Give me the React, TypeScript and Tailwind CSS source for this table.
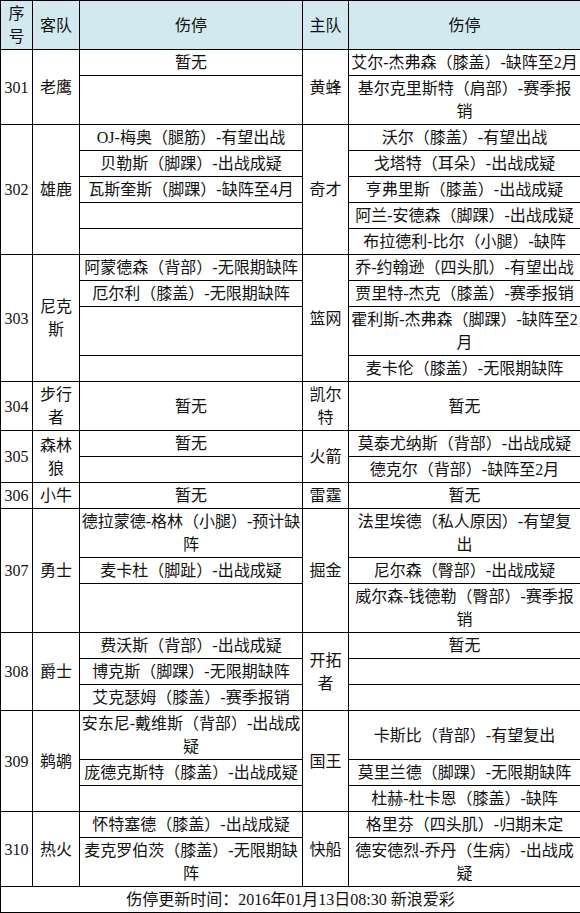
// NBA 伤停表 (2016-01-13)

type Group = {
  no: string
  away: string
  home: string
  left: string[]
  right: string[]
}

const groups: Group[] = [
  {
    no: '301',
    away: '老鹰',
    home: '黄蜂',
    left: ['暂无', ''],
    right: ['艾尔-杰弗森（膝盖）-缺阵至2月', '基尔克里斯特（肩部）-赛季报销'],
  },
  {
    no: '302',
    away: '雄鹿',
    home: '奇才',
    left: ['OJ-梅奥（腿筋）-有望出战', '贝勒斯（脚踝）-出战成疑', '瓦斯奎斯（脚踝）-缺阵至4月', '', ''],
    right: [
      '沃尔（膝盖）-有望出战',
      '戈塔特（耳朵）-出战成疑',
      '亨弗里斯（膝盖）-出战成疑',
      '阿兰-安德森（脚踝）-出战成疑',
      '布拉德利-比尔（小腿）-缺阵',
    ],
  },
  {
    no: '303',
    away: '尼克斯',
    home: '篮网',
    left: ['阿蒙德森（背部）-无限期缺阵', '厄尔利（膝盖）-无限期缺阵', '', ''],
    right: [
      '乔-约翰逊（四头肌）-有望出战',
      '贾里特-杰克（膝盖）-赛季报销',
      '霍利斯-杰弗森（脚踝）-缺阵至2月',
      '麦卡伦（膝盖）-无限期缺阵',
    ],
  },
  { no: '304', away: '步行者', home: '凯尔特', left: ['暂无'], right: ['暂无'] },
  {
    no: '305',
    away: '森林狼',
    home: '火箭',
    left: ['暂无', ''],
    right: ['莫泰尤纳斯（背部）-出战成疑', '德克尔（背部）-缺阵至2月'],
  },
  { no: '306', away: '小牛', home: '雷霆', left: ['暂无'], right: ['暂无'] },
  {
    no: '307',
    away: '勇士',
    home: '掘金',
    left: ['德拉蒙德-格林（小腿）-预计缺阵', '麦卡杜（脚趾）-出战成疑', ''],
    right: ['法里埃德（私人原因）-有望复出', '尼尔森（臀部）-出战成疑', '威尔森-钱德勒（臀部）-赛季报销'],
  },
  {
    no: '308',
    away: '爵士',
    home: '开拓者',
    left: ['费沃斯（背部）-出战成疑', '博克斯（脚踝）-无限期缺阵', '艾克瑟姆（膝盖）-赛季报销'],
    right: ['暂无', '', ''],
  },
  {
    no: '309',
    away: '鹈鹕',
    home: '国王',
    left: ['安东尼-戴维斯（背部）-出战成疑', '庞德克斯特（膝盖）-出战成疑', ''],
    right: ['卡斯比（背部）-有望复出', '莫里兰德（脚踝）-无限期缺阵', '杜赫-杜卡恩（膝盖）-缺阵'],
  },
  {
    no: '310',
    away: '热火',
    home: '快船',
    left: ['怀特塞德（膝盖）-出战成疑', '麦克罗伯茨（膝盖）-无限期缺阵'],
    right: ['格里芬（四头肌）-归期未定', '德安德烈-乔丹（生病）-出战成疑'],
  },
]

const cell = 'border border-black text-center align-middle py-[1px] px-0'
const leftCell = 'border border-black text-center align-middle py-[1px] px-[1px]'
const rightCell = 'border border-black text-center align-middle py-[1px] px-[2px]'

function GroupRows({ g }: { g: Group }) {
  const n = Math.max(g.left.length, g.right.length)
  return (
    <>
      {Array.from({ length: n }).map((_, i) => (
        <tr key={i}>
          {i === 0 && (
            <>
              <td rowSpan={n} className={cell}>{g.no}</td>
              <td rowSpan={n} className={cell}>{g.away}</td>
            </>
          )}
          <td className={leftCell}>{g.left[i] || '\u00a0'}</td>
          {i === 0 && <td rowSpan={n} className={cell}>{g.home}</td>}
          <td className={rightCell}>{g.right[i] || '\u00a0'}</td>
        </tr>
      ))}
    </>
  )
}

export default function App() {
  return (
    <div className="w-[580px] bg-white text-[#111] font-['Liberation_Serif','Noto_Sans_CJK_SC',serif] text-[16px] leading-[23px]">
      <table className="w-[580px] table-fixed border-collapse">
        <colgroup>
          <col className="w-[32px]" />
          <col className="w-[47px]" />
          <col className="w-[223px]" />
          <col className="w-[46px]" />
          <col className="w-[232px]" />
        </colgroup>
        <thead>
          <tr className="bg-[#d2e9f0]">
            <th className={`${cell} font-normal`}>序号</th>
            <th className={`${cell} font-normal`}>客队</th>
            <th className={`${cell} font-normal`}>伤停</th>
            <th className={`${cell} font-normal`}>主队</th>
            <th className={`${cell} font-normal`}>伤停</th>
          </tr>
        </thead>
        <tbody>
          {groups.map((g) => (
            <GroupRows key={g.no} g={g} />
          ))}
          <tr>
            <td colSpan={5} className={cell}>
              伤停更新时间：2016年01月13日08:30 新浪爱彩
            </td>
          </tr>
        </tbody>
      </table>
    </div>
  )
}
